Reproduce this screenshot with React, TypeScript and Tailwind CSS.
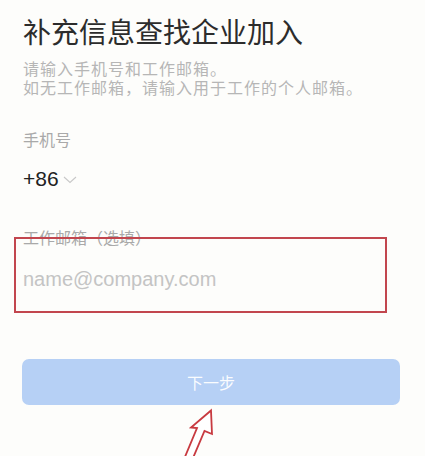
import React from "react";

export default function App() {
  const cjk = { fontFamily: '"Noto Sans CJK SC", "Noto Sans", sans-serif' };
  const latin = { fontFamily: '"Liberation Sans", "Noto Sans CJK SC", sans-serif' };
  return (
    <div className="relative w-[425px] h-[456px] overflow-hidden bg-[#fdfdfb]" style={cjk}>
      <div className="flex flex-col px-[23px]">
        <div className="mt-[14px] text-[28px] leading-[34px] text-[#2c2c2c]">
          补充信息查找企业加入
        </div>
        <div className="mt-[11px] text-[16px] leading-[19px] tracking-[1px] text-[#b6b6b6]">
          <div>请输入手机号和工作邮箱。</div>
          <div>如无工作邮箱，请输入用于工作的个人邮箱。</div>
        </div>
        <div className="mt-[31px] text-[16px] leading-[22px] text-[#a9a9a9]">手机号</div>
        <div className="mt-[15px] flex items-center h-[28px]">
          <span className="text-[21px] leading-[28px] text-[#222]" style={latin}>+86</span>
          <svg width="14" height="8" viewBox="0 0 14 8" className="ml-[4px] mt-[1px]">
            <polyline points="1,1 7,6.5 13,1" fill="none" stroke="#c8c8c8" strokeWidth="1.1" />
          </svg>
        </div>
        <div className="mt-[33px] text-[16px] leading-[22px] text-[#a9a9a9]">工作邮箱（选填）</div>
        <div className="mt-[17px] text-[20px] leading-[28px] text-[#c4c4c4]" style={latin}>
          name@company.com
        </div>
        <button className="mt-[66px] h-[46px] w-[378px] -ml-[1px] rounded-[7px] bg-[#b6d0f5] text-[16px] text-white/95 flex items-center justify-center">
          下一步
        </button>
      </div>

      <div className="absolute left-[14px] top-[237px] w-[373px] h-[76px] border-2 border-[#c2464e]" />

      <svg className="absolute left-0 top-0" width="425" height="456" viewBox="0 0 425 456">
        <polygon
          points="211,410.5 212,434 204.5,431 193,458 184.5,458 197,428 191,427.5"
          fill="#fff"
          stroke="#c83a40"
          strokeWidth="1.8"
          strokeLinejoin="miter"
        />
      </svg>
    </div>
  );
}
